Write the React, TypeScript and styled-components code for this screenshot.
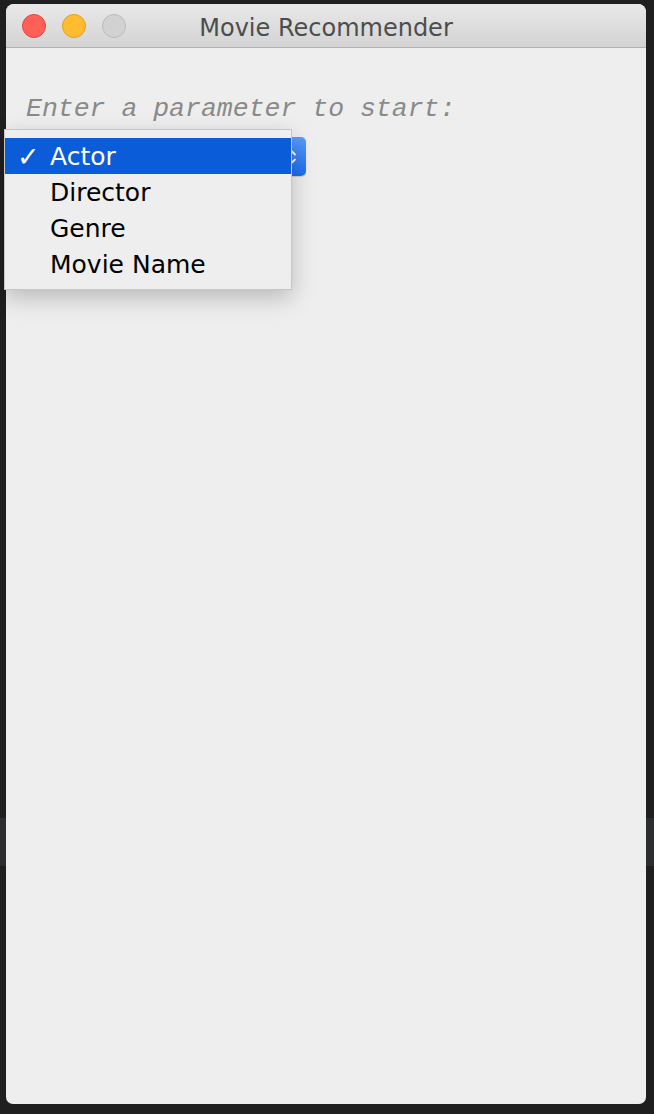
import React, { useState } from 'react';
import styled, { createGlobalStyle } from 'styled-components';

const GlobalStyle = createGlobalStyle`
  html, body {
    margin: 0;
    padding: 0;
  }
  body {
    width: 654px;
    height: 1114px;
    overflow: hidden;
    background: linear-gradient(
      to bottom,
      #1f1f1f 0,
      #1f1f1f 818px,
      #2b2d30 818px,
      #2b2d30 866px,
      #1f1f1f 866px
    );
  }
`;

const OPTIONS = ['Actor', 'Director', 'Genre', 'Movie Name'];

const lightColors = {
  close: { fill: '#fe5f57', border: '#e2463f' },
  minimize: { fill: '#febc2e', border: '#dea123' },
  zoom: { fill: '#d2d2d2', border: '#bcbcbc' },
};

type Light = keyof typeof lightColors;

const App: React.FC = () => {
  const [selected] = useState('Actor');

  return (
    <>
      <GlobalStyle />
      <Window>
        <TitleBar>
          <Lights>
            {(['close', 'minimize', 'zoom'] as Light[]).map((l) => (
              <TrafficLight key={l} kind={l} />
            ))}
          </Lights>
          <Title>Movie Recommender</Title>
          <span />
        </TitleBar>
        <Content>
          <Prompt>Enter a parameter to start:</Prompt>
          <ComboWrap>
            {/* the combo box sits under its open menu; only its arrows peek out */}
            <Combo aria-label={selected}>
              <svg width="10" height="20" viewBox="0 0 10 20">
                <path
                  d="M2 7.5 L5 4.5 L8 7.5 M2 12.5 L5 15.5 L8 12.5"
                  fill="none"
                  stroke="#fff"
                  strokeWidth="1.8"
                  strokeLinecap="round"
                  strokeLinejoin="round"
                />
              </svg>
            </Combo>
            <Menu>
              {OPTIONS.map((o) => (
                <MenuItem key={o} active={o === selected}>
                  <Check>{o === selected ? '✓' : ''}</Check>
                  {o}
                </MenuItem>
              ))}
            </Menu>
          </ComboWrap>
        </Content>
      </Window>
    </>
  );
};

const Window = styled.div`
  margin: 4px 0 0 6px;
  width: 640px;
  height: 1100px;
  display: flex;
  flex-direction: column;
  background: #eeeeee;
  border-radius: 8px 8px 7px 7px;
`;

const TitleBar = styled.div`
  height: 43px;
  flex-shrink: 0;
  display: grid;
  grid-template-columns: 1fr auto 1fr;
  align-items: center;
  border-radius: 8px 8px 0 0;
  border-bottom: 1px solid #b2b2b2;
  background: linear-gradient(to bottom, #e9e9e9, #d3d3d3);
`;

const Lights = styled.div`
  display: flex;
  gap: 16px;
  padding-left: 16px;
`;

const TrafficLight = styled.span<{ kind: Light }>`
  width: 24px;
  height: 24px;
  box-sizing: border-box;
  border-radius: 50%;
  background: ${(p) => lightColors[p.kind].fill};
  border: 1px solid ${(p) => lightColors[p.kind].border};
`;

const Title = styled.div`
  font-family: 'DejaVu Sans', 'Liberation Sans', sans-serif;
  font-size: 24px;
  color: #4d4d4d;
  padding-top: 4px;
`;

const Content = styled.div`
  flex: 1;
  display: flex;
  flex-direction: column;
  align-items: flex-start;
  padding: 46px 0 0 20px;
`;

const Prompt = styled.div`
  font-family: 'Liberation Mono', 'Courier New', monospace;
  font-style: italic;
  font-size: 26.5px;
  line-height: 30px;
  color: #8a8a8a;
`;

const ComboWrap = styled.div`
  position: relative;
  margin-top: 13px;
`;

const Combo = styled.div`
  width: 280px;
  height: 39px;
  box-sizing: border-box;
  display: flex;
  align-items: center;
  justify-content: flex-end;
  padding: 0 9px 0 14px;
  border-radius: 5px;
  background: linear-gradient(to bottom, #5a9cfa, #1a6cf0);
  box-shadow: 0 1px 1px rgba(0, 0, 0, 0.15);
`;

const Menu = styled.div`
  position: absolute;
  top: -8px;
  left: -22px;
  width: 288px;
  box-sizing: border-box;
  padding: 8px 0 7px;
  background: #eeeeee;
  border: 1px solid #c6c6c6;
  box-shadow: 0 8px 22px rgba(0, 0, 0, 0.22);
`;

const MenuItem = styled.div<{ active: boolean }>`
  height: 36px;
  display: flex;
  align-items: center;
  padding-left: 12px;
  font-family: 'DejaVu Sans', 'Liberation Sans', sans-serif;
  font-size: 25px;
  color: ${(p) => (p.active ? '#ffffff' : '#000000')};
  background: ${(p) => (p.active ? '#0b5cd8' : 'transparent')};
`;

const Check = styled.span`
  width: 33px;
  font-size: 27px;
  font-weight: bold;
  line-height: 1;
`;

export default App;
